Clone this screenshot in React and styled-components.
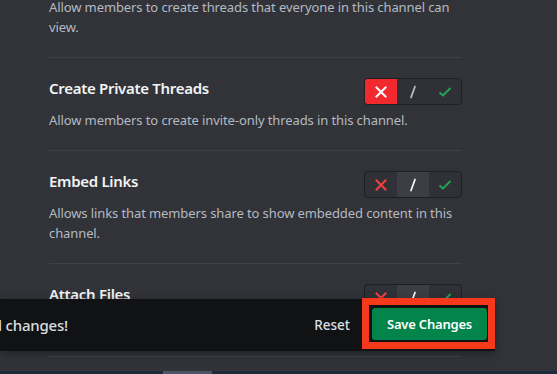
import React from 'react';
import styled, { createGlobalStyle } from 'styled-components';

const GlobalStyle = createGlobalStyle`
  html, body {
    margin: 0;
    padding: 0;
    background: #313338;
  }
  body {
    font-family: 'Noto Sans', 'Open Sans', sans-serif;
  }
`;

const permissions = [
  {
    title: 'Create Public Threads',
    desc: 'Allow members to create threads that everyone in this channel can view.',
    value: 'neutral',
  },
  {
    title: 'Create Private Threads',
    desc: 'Allow members to create invite-only threads in this channel.',
    value: 'deny',
  },
  {
    title: 'Embed Links',
    desc: 'Allows links that members share to show embedded content in this channel.',
    value: 'neutral',
  },
  {
    title: 'Attach Files',
    desc: 'Allows members to upload files or media in this channel.',
    value: 'neutral',
  },
];

const CrossIcon = ({ color }) => (
  <svg width='12' height='12' viewBox='0 0 12 12'>
    <path d='M1.5 1.5 L10.5 10.5 M10.5 1.5 L1.5 10.5' stroke={color} strokeWidth='2' strokeLinecap='square' fill='none' />
  </svg>
);

const SlashIcon = ({ color }) => (
  <svg width='8' height='14' viewBox='0 0 8 14'>
    <path d='M6 1.5 L2 12.5' stroke={color} strokeWidth='1.8' strokeLinecap='round' fill='none' />
  </svg>
);

const CheckIcon = ({ color }) => (
  <svg width='14' height='12' viewBox='0 0 14 12'>
    <path d='M1.5 6.5 L5 9.5 L12.5 2' stroke={color} strokeWidth='1.8' fill='none' />
  </svg>
);

const PermissionToggle = ({ value }) => (
  <Toggle>
    <Segment $bg={value === 'deny' ? '#f22a30' : 'transparent'}>
      <CrossIcon color={value === 'deny' ? '#ffffff' : '#f23f43'} />
    </Segment>
    <Segment $bg={value === 'neutral' ? '#3c3e45' : 'transparent'}>
      <SlashIcon color={value === 'neutral' ? '#f2f3f5' : '#b5bac1'} />
    </Segment>
    <Segment $bg={value === 'allow' ? '#23a55a' : 'transparent'}>
      <CheckIcon color={value === 'allow' ? '#ffffff' : '#23a55a'} />
    </Segment>
  </Toggle>
);

const App = () => {
  return (
    <Page>
      <GlobalStyle />
      <List>
        {permissions.map((p) => (
          <Section key={p.title}>
            <Row>
              <Title>{p.title}</Title>
              <PermissionToggle value={p.value} />
            </Row>
            <Desc>{p.desc}</Desc>
          </Section>
        ))}
      </List>
      <NoticeBar>
        <Message>
          <span>Careful — you have unsaved changes!</span>
        </Message>
        <Reset>Reset</Reset>
        <Highlight>
          <SaveButton>Save Changes</SaveButton>
        </Highlight>
      </NoticeBar>
      <Taskbar>
        <TaskItem />
      </Taskbar>
    </Page>
  );
};

export default App;

const Page = styled.div`
  position: relative;
  width: 557px;
  height: 374px;
  overflow: hidden;
  background: #313338;
  display: flex;
  flex-direction: column;
`;

const List = styled.div`
  flex: 1;
  margin-top: -55px;
  padding-left: 49px;
  width: 413px;
`;

const Section = styled.div`
  padding: 20px 0 20px;
  border-bottom: 1px solid #3f4147;
`;

const Row = styled.div`
  display: flex;
  justify-content: space-between;
  align-items: flex-start;
  height: 27px;
`;

const Title = styled.div`
  padding-top: 0;
  font-size: 15px;
  line-height: 20px;
  font-weight: 600;
  letter-spacing: -0.3px;
  color: #f2f3f5;
`;

const Desc = styled.div`
  margin-top: 5px;
  font-size: 13px;
  line-height: 20px;
  letter-spacing: -0.1px;
  color: #b5bac1;
`;

const Toggle = styled.div`
  display: flex;
  height: 25px;
  border: 1px solid #1e1f22;
  border-radius: 4px;
  overflow: hidden;
  background: #2f3136;
`;

const Segment = styled.div`
  width: 32px;
  display: flex;
  align-items: center;
  justify-content: center;
  background: ${(p) => p.$bg};
`;

const NoticeBar = styled.div`
  position: absolute;
  left: 0;
  top: 299px;
  width: 495px;
  height: 52px;
  background: #111214;
  display: flex;
  align-items: center;
  box-shadow: 0 2px 8px rgba(0, 0, 0, 0.35);
`;

const Message = styled.div`
  width: 68px;
  display: flex;
  justify-content: flex-end;
  white-space: nowrap;
  font-size: 15px;
  font-weight: 500;
  letter-spacing: -0.2px;
  color: #dbdee1;
`;

const Reset = styled.div`
  margin-left: auto;
  margin-right: 12px;
  font-size: 13.5px;
  font-weight: 500;
  color: #dbdee1;
`;

const Highlight = styled.div`
  align-self: flex-start;
  margin-top: -1px;
  border: 7px solid #f5391a;
  padding: 3px 1px 2px 3px;
  background: #111214;
`;

const SaveButton = styled.button`
  display: flex;
  align-items: center;
  justify-content: center;
  width: 115px;
  height: 32px;
  border: none;
  border-radius: 3px;
  background: #02844b;
  color: #ffffff;
  font-family: 'Noto Sans', 'Open Sans', sans-serif;
  font-size: 13px;
  font-weight: 600;
  letter-spacing: -0.2px;
`;

const Taskbar = styled.div`
  height: 3px;
  background: #1d2a39;
  padding-left: 163px;
`;

const TaskItem = styled.div`
  width: 49px;
  height: 3px;
  background: #4a5568;
`;
